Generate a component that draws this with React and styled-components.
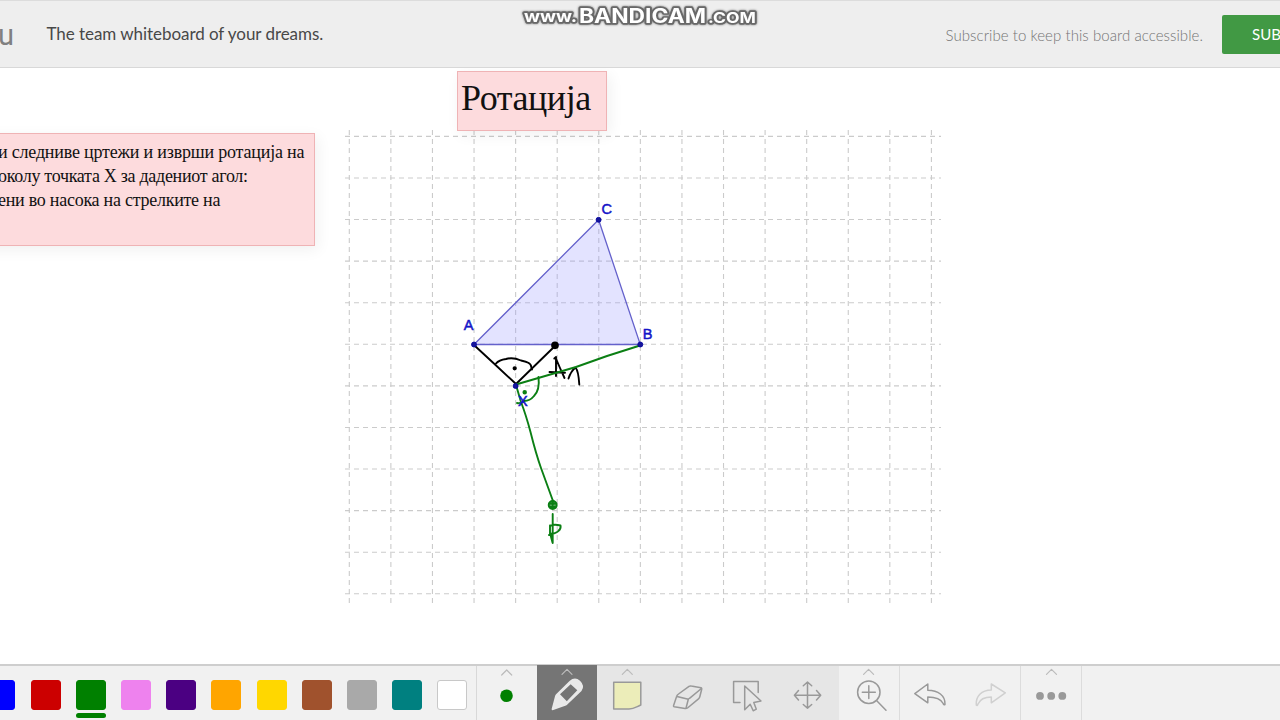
import styled, { createGlobalStyle } from "styled-components";

const GlobalStyle = createGlobalStyle`
  * {
    box-sizing: border-box;
  }

  body {
    margin: 0;
    overflow: hidden;
    background: #fff;
  }
`;

const Page = styled.div`
  display: flex;
  flex-direction: column;
  width: 1280px;
  height: 720px;
  overflow: hidden;
  font-family: Lato, "Open Sans", sans-serif;
`;

const Header = styled.header`
  position: relative;
  display: flex;
  align-items: center;
  flex: none;
  height: 68px;
  overflow: hidden;
  background: #eee;
  border-top: 1px solid #dcdcdc;
  border-bottom: 1px solid #d8d8d8;
`;

const Logo = styled.span`
  flex: none;
  width: 46px;
  margin-left: -2px;
  padding-top: 2px;
  color: #808080;
  font-family: Roboto, sans-serif;
  font-size: 29px;
  line-height: 32px;
`;

const Tagline = styled.span`
  flex: 1;
  margin-left: 2.5px;
  color: #484848;
  font-size: 17px;
  line-height: 24px;
  letter-spacing: -0.05px;
  white-space: nowrap;
`;

const Notice = styled.span`
  margin-right: 19px;
  padding-top: 1px;
  color: #747474;
  font-size: 15px;
  font-weight: 300;
  line-height: 20px;
  letter-spacing: 0.06px;
  white-space: nowrap;
`;

const SubscribeButton = styled.button`
  flex: none;
  width: 120px;
  height: 39px;
  margin-right: -62px;
  padding: 0 0 1px 30px;
  border: none;
  border-radius: 2px;
  background: #419944;
  color: #fff;
  font-family: inherit;
  font-size: 15px;
  text-align: left;
  white-space: nowrap;
`;

const Watermark = styled.svg`
  position: absolute;
  top: 1px;
  left: 518px;
  width: 244px;
  height: 28px;
  font-family: Inter, sans-serif;
  font-weight: 700;
  fill: #fff;
  stroke: #686868;
  stroke-width: 3.4px;
  stroke-linejoin: round;
  paint-order: stroke;
  filter: drop-shadow(0 0 1px #777);
`;

const Board = styled.main`
  position: relative;
  flex: 1;
  overflow: hidden;
  background: #fff;
`;

const Note = styled.div`
  position: absolute;
  top: ${({ $top }) => $top}px;
  left: ${({ $left }) => $left}px;
  width: ${({ $width }) => $width}px;
  height: ${({ $height }) => $height}px;
  padding: ${({ $padding }) => $padding};
  border: 1px solid #efb3b5;
  background: #fddbdd;
  box-shadow: 3px 4px 14px rgba(0, 0, 0, 0.06);
  color: #111;
  font-family: "Liberation Serif", serif;
  font-size: ${({ $size }) => $size}px;
  line-height: ${({ $line }) => $line}px;
  white-space: nowrap;
`;

const NoteLine = styled.div`
  letter-spacing: ${({ $spacing }) => $spacing || 0}px;
`;

const Drawing = styled.svg`
  position: absolute;
  top: 0;
  left: 340px;
  width: 610px;
  height: 596px;
  font-family: "Liberation Sans", sans-serif;
`;

const Toolbar = styled.footer`
  display: flex;
  flex: none;
  height: 56px;
  border-top: 2px solid #cecece;
  background: #f1f1f1;
`;

const Palette = styled.div`
  display: flex;
  flex: none;
  gap: 15.2px;
  width: 477px;
  padding-top: 14px;
  overflow: hidden;
  border-right: 1px solid #d8d8d8;
`;

const Swatch = styled.div`
  flex: none;
  width: 30px;
  height: 30px;
  border-radius: 3px;
  border: 1px solid ${({ $edge, $color }) => $edge || $color};
  background: ${({ $color }) => $color};
`;

const SwatchSlot = styled.div`
  display: flex;
  flex: none;
  flex-direction: column;
  gap: 2.5px;

  &:first-child {
    margin-left: -14.6px;
  }
`;

const ActiveMark = styled.div`
  width: 30px;
  height: 5px;
  border-radius: 2.5px;
  background: #008000;
`;

const Tool = styled.div`
  display: flex;
  flex: none;
  width: ${({ $width }) => $width}px;
  height: ${({ $active }) => ($active ? 55 : 54)}px;
  margin-top: ${({ $active }) => ($active ? -1 : 0)}px;
  padding-top: ${({ $active }) => ($active ? 1 : 0)}px;
  border-right: ${({ $divided }) => ($divided ? "1px solid #dcdcdc" : "none")};
  background: ${({ $active, $grouped }) =>
    $active ? "#757575" : $grouped ? "#e6e6e6" : "transparent"};
`;

const Icon = styled.svg`
  flex: none;
  width: 60px;
  height: 54px;
  fill: none;
  stroke: ${({ $faded }) => ($faded ? "#d0d0d0" : "#999")};
  stroke-width: 1.5;
  stroke-linejoin: round;
  stroke-linecap: round;
`;

const swatches = [
  { color: "#0000ff" },
  { color: "#cc0000" },
  { color: "#008000", active: true },
  { color: "#ee82ee" },
  { color: "#4b0082" },
  { color: "#ffa500" },
  { color: "#ffd700" },
  { color: "#a0522d" },
  { color: "#a9a9a9" },
  { color: "#008080" },
  { color: "#ffffff", edge: "#c8c8c8" },
];

const tools = [
  {
    name: "size",
    x: 477,
    width: 60,
    chevron: [506.7, 670],
    shape: <circle cx="506.5" cy="695.8" r="6.3" fill="#008000" stroke="none" />,
  },
  {
    name: "pen",
    x: 537,
    width: 60,
    active: true,
    chevron: [567, 669.3],
    shape: (
      <path
        d="M552.6 710.2Q551.3 710.3 551.7 708.8L555 696.3Q555.3 695 556.3 694L569.5 681Q575 676.2 580 680.8Q585.3 686 581.5 691L567.6 704.3Q567 705 566 705.4ZM570.7 684.3L560 694.3L566.8 701.2L577.3 690.3Z"
        fill="#e9e9e9"
        stroke="none"
        fillRule="evenodd"
      />
    ),
  },
  {
    name: "sticky",
    x: 597,
    width: 60,
    grouped: true,
    chevron: [627.3, 669.3],
    shape: (
      <path
        d="M613.7 682.2H640.8V705C636 707 634 708.9 629 708.9H613.7Z"
        fill="#ecedb9"
      />
    ),
  },
  {
    name: "eraser",
    x: 657,
    width: 60,
    grouped: true,
    shape: (
      <path d="M673.6 705.5L676.6 696.5Q677 695 678.5 694L689 686.3Q690 685.7 691.3 686L701 687.8Q702 688 701.7 689.2L699.8 696.8Q699.5 698 698.5 698.8L687.5 708Q686.5 708.7 685 708.5L674.3 706.7Q673.3 706.5 673.6 705.5ZM677 696.5L687.3 699Q688.5 699.2 689.5 698.3L701.4 688.5M688.3 699.2L686 708.3" />
    ),
  },
  {
    name: "select",
    x: 717,
    width: 61,
    grouped: true,
    shape: (
      <path d="M740 702.4H733.6V681.5H758.2V692.5M744.7 686V709.8L750.2 704.2L753.2 710.8L756.3 709.2L753.8 702.5L761 701Z" />
    ),
  },
  {
    name: "move",
    x: 778,
    width: 61,
    grouped: true,
    shape: (
      <path d="M794.5 695.2H820.5M807.5 682.2V708.2M803.3 685.7L807.5 682L811.7 685.7M803.3 704.5L807.5 708.3L811.7 704.5M798.5 690.5L794.4 695.2L798.5 699.9M816.5 690.5L820.7 695.2L816.5 699.9" />
    ),
  },
  {
    name: "zoom",
    x: 839,
    width: 61,
    divided: true,
    chevron: [868.6, 669.3],
    shape: (
      <path d="M880 692.2A11.2 11.2 0 1 1 857.6 692.2A11.2 11.2 0 1 1 880 692.2M862.3 692.2H875.3M868.8 685.7V698.5M876.5 700.5L886 710.3" />
    ),
  },
  {
    name: "undo",
    x: 900,
    width: 60,
    shape: (
      <path d="M914.8 693.6L927.8 684V690.2C938 690.3 945.5 695.5 945 704.5Q943.7 705.3 943.2 703.5C940.5 698.3 935 697 927.8 697V702.8Z" />
    ),
  },
  {
    name: "redo",
    x: 960,
    width: 61,
    divided: true,
    faded: true,
    shape: (
      <path d="M1005.3 692.8L991.3 684V690C981.5 690 975.5 696.5 976.3 705.2Q977.5 706 978 704C980.5 698.3 985 697 991.3 697V702.8Z" />
    ),
  },
  {
    name: "more",
    x: 1021,
    width: 61,
    divided: true,
    chevron: [1051.5, 669.3],
    shape: (
      <g fill="#999" stroke="none">
        <circle cx="1040" cy="695.9" r="3.9" />
        <circle cx="1051.2" cy="695.9" r="3.9" />
        <circle cx="1062.3" cy="695.9" r="3.9" />
      </g>
    ),
  },
];

const STEP = 41.58;
const columns = Array.from({ length: 15 }, (_, i) => 349.3 + i * STEP);
const rows = Array.from({ length: 12 }, (_, i) => 136.4 + i * STEP);

const Geometry = () => (
  <Drawing viewBox="340 68 610 596">
    <g stroke="#cbcbcb" strokeWidth="1.1" strokeDasharray="5 4">
      {columns.map((x) => (
        <line key={x} x1={x} x2={x} y1="130" y2="605" />
      ))}
      {rows.map((y) => (
        <line key={y} x1="345" x2="941" y1={y} y2={y} />
      ))}
    </g>

    <path
      d="M474 344.5L598.6 219.8L640.3 344.5Z"
      fill="#9999ff"
      fillOpacity="0.28"
      stroke="#6461cb"
      strokeWidth="1.3"
    />

    {/* hand drawn rotation of A */}
    <g
      fill="none"
      stroke="#000"
      strokeWidth="1.9"
      strokeLinecap="round"
      strokeLinejoin="round"
    >
      <path d="M474.5 345.5L495 364.5L516 384L536 364.5L555 346" />
      <path d="M496 363.5Q499 360 506 359Q513 357 521 360.5Q531 362.5 531 366L532 369.5" />
      <path d="M554.3 358.5L556 357V376M555.5 357.5L560 368L564.5 378M549.5 372L565 372.8M568.5 378.5Q571 371 575.5 367.5Q578.5 371 579.3 384.5" />
      <circle cx="514.7" cy="368.3" r="1.2" fill="#000" />
      <circle cx="555" cy="345.3" r="2.9" fill="#000" />
    </g>

    {/* hand drawn rotation of B */}
    <g
      fill="none"
      stroke="#0b7f14"
      strokeWidth="1.9"
      strokeLinecap="round"
      strokeLinejoin="round"
    >
      <path d="M640 345.5L607 356L576 367L516 384.5" />
      <path d="M516 385L521 402Q526 415 530.5 432Q536 454 541 468L553 501" />
      <path d="M538.5 377Q540 390 534 396Q530 401 524 401Q521 404 517 403" />
      <circle cx="524.7" cy="392.3" r="1.3" fill="#0b7f14" />
      <circle cx="552.7" cy="505" r="4" fill="#0b7f14" fillOpacity="0.7" />
      <path d="M549.5 503.5H555.5M550 507H555M552.7 500.5V505" />
      <path d="M552.7 514V543M549 535L552.5 533L552.5 542.5L550.8 536M550 535V525.5Q555 524 560.5 525.5Q562 532 549 535" />
    </g>

    <g fill="#16169a" stroke="#0000a0" strokeWidth="0.8">
      <circle cx="474" cy="344.5" r="2.5" />
      <circle cx="598.6" cy="219.8" r="2.5" />
      <circle cx="640.3" cy="344.5" r="2.5" />
      <circle cx="515.6" cy="386" r="2.5" />
    </g>

    <g fill="#1414c8" fontSize="14.5" stroke="#1414c8" strokeWidth="0.5">
      <text x="463.7" y="330.3">A</text>
      <text x="642.7" y="339">B</text>
      <text x="601.5" y="214.3">C</text>
      <text x="518" y="406">X</text>
    </g>
  </Drawing>
);

const App = () => (
  <>
    <GlobalStyle />
    <Page>
      <Header>
        <Logo>u</Logo>
        <Tagline>The team whiteboard of your dreams.</Tagline>
        <Notice>Subscribe to keep this board accessible.</Notice>
        <SubscribeButton type="button">SUBSCRIBE</SubscribeButton>
        <Watermark viewBox="518 2 244 28">
          <text x="524" y="22" fontSize="16" textLength="53" lengthAdjust="spacingAndGlyphs">
            www.
          </text>
          <text x="579" y="22.5" fontSize="19.5" textLength="127" lengthAdjust="spacingAndGlyphs">
            BANDICAM
          </text>
          <text x="708" y="22.5" fontSize="14.5" textLength="48" lengthAdjust="spacingAndGlyphs">
            .COM
          </text>
        </Watermark>
      </Header>

      <Board>
        <Geometry />
        <Note $top={3} $left={457} $width={150} $height={60} $padding="5px 3px" $size={36} $line={42}>
          <NoteLine $spacing={-0.45}>Ротација</NoteLine>
        </Note>
        <Note $top={64.5} $left={-20} $width={334.6} $height={113.5} $padding="6px 0 0 17px" $size={18} $line={24}>
          <NoteLine $spacing={-0.19}>и следниве цртежи и изврши ротација на</NoteLine>
          <NoteLine $spacing={-0.29}>околу точката X за дадениот агол:</NoteLine>
          <NoteLine $spacing={-0.26}>ени во насока на стрелките на</NoteLine>
        </Note>
      </Board>

      <Toolbar>
        <Palette>
          {swatches.map(({ color, edge, active }) => (
            <SwatchSlot key={color}>
              <Swatch $color={color} $edge={edge} />
              {active && <ActiveMark />}
            </SwatchSlot>
          ))}
        </Palette>
        {tools.map(({ name, x, width, active, grouped, divided, faded, chevron, shape }) => (
          <Tool key={name} $width={width} $active={active} $grouped={grouped} $divided={divided}>
            <Icon viewBox={`${x} 666 60 54`} $faded={faded}>
              {chevron && (
                <path
                  d={`M${chevron[0] - 5} ${chevron[1] + 5}l5 -5l5 5`}
                  stroke="#bbb"
                  strokeWidth="1.2"
                />
              )}
              {shape}
            </Icon>
          </Tool>
        ))}
      </Toolbar>
    </Page>
  </>
);

export default App;
